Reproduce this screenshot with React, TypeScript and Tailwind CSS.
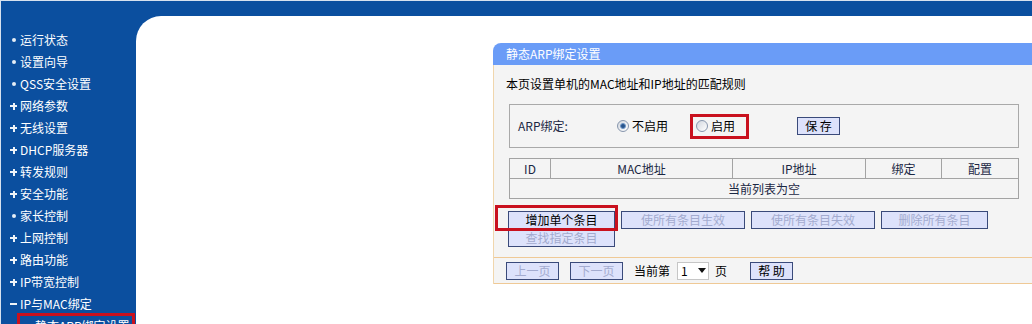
import React from "react";

type Bullet = "dot" | "plus" | "minus";

const menu: [Bullet, string][] = [
  ["dot", "运行状态"],
  ["dot", "设置向导"],
  ["dot", "QSS安全设置"],
  ["plus", "网络参数"],
  ["plus", "无线设置"],
  ["plus", "DHCP服务器"],
  ["plus", "转发规则"],
  ["plus", "安全功能"],
  ["dot", "家长控制"],
  ["plus", "上网控制"],
  ["plus", "路由功能"],
  ["plus", "IP带宽控制"],
  ["minus", "IP与MAC绑定"],
];

const BulletMark: React.FC<{ kind: Bullet }> = ({ kind }) => {
  if (kind === "dot")
    return (
      <span className="w-[10px] flex items-center">
        <span className="ml-[2px] w-[4px] h-[4px] rounded-full bg-[#e6eef6]" />
      </span>
    );
  if (kind === "plus")
    return (
      <span className="w-[10px] flex items-center">
        <span className="relative w-[7px] h-[7px]">
          <span className="absolute left-0 top-[2.5px] w-[7px] h-[2px] bg-[#eef3f8]" />
          <span className="absolute left-[2.5px] top-0 w-[2px] h-[7px] bg-[#eef3f8]" />
        </span>
      </span>
    );
  return (
    <span className="w-[10px] flex items-center">
      <span className="w-[7px] h-[2px] bg-[#eef3f8]" />
    </span>
  );
};

const Btn: React.FC<{ label: string; w: string; off?: boolean }> = ({ label, w, off }) => (
  <div
    className={`${w} h-[18px] flex items-center justify-center bg-[#dde2fb] border border-[#3a4a7a] text-[12px] leading-none ${
      off ? "text-[#a3abcf]" : "text-black"
    }`}
  >
    {label}
  </div>
);

const Radio: React.FC<{ on?: boolean }> = ({ on }) => (
  <span className="w-[12px] h-[12px] rounded-full border border-[#8796ad] bg-gradient-to-br from-[#d2d7df] to-white flex items-center justify-center">
    {on && <span className="w-[6px] h-[6px] rounded-full bg-[#28538a] border border-[#6f97c8]" />}
  </span>
);

export default function App() {
  return (
    <div className="w-[1032px] h-[324px] overflow-hidden bg-[#0b4f9f] border-t border-l border-[#d7e2ef] flex flex-col font-['Noto_Sans_CJK_SC',sans-serif] text-[12px]">
      <div className="h-[15px] shrink-0" />
      <div className="flex flex-1 min-h-0">
        {/* sidebar */}
        <div className="w-[135px] shrink-0 pt-[13px] text-white">
          {menu.map(([b, t]) => (
            <div key={t} className="h-[22px] flex items-center pl-[9px]">
              <BulletMark kind={b} />
              <span className="leading-none">{t}</span>
            </div>
          ))}
          <div className="ml-[16px] -mt-[2px] w-[118px] h-[26px] border-[3px] border-[#c9111e] flex items-center pl-[7px]">
            <span className="w-[5px] h-[1px] bg-white mr-[3px]" />
            <span className="leading-none">静态ARP绑定设置</span>
          </div>
        </div>

        {/* main */}
        <div className="flex-1 bg-white rounded-tl-[25px] pt-[27px] pl-[357px]">
          <div className="w-[540px]">
            <div className="h-[22px] bg-[#6a9cf7] rounded-tl-[8px] text-white flex items-center pl-[13px]">
              静态ARP绑定设置
            </div>
            <div className="bg-[#f4f4f4] border-l border-[#f0d6ad] relative">
              <div className="h-[29px] pt-[9px] pl-[12px] flex items-center text-black">
                本页设置单机的MAC地址和IP地址的匹配规则
              </div>

              <div className="ml-[15px] mt-[10px] w-[510px] h-[44px] border border-[#a9a9a9] flex items-center pl-[8px] relative">
                <span className="w-[99px] text-[#1b2743]">ARP绑定:</span>
                <Radio on />
                <span className="ml-[3px] text-black">不启用</span>
                <span className="ml-[28px]">
                  <Radio />
                </span>
                <span className="ml-[3px] text-black">启用</span>
                <div className="absolute left-[180px] top-[9px] w-[59px] h-[25px] border-[3px] border-[#c9111e]" />
                <div className="ml-[62px] w-[43px] h-[18px] flex items-center justify-center bg-[#dde2fb] border border-[#3a4a7a] text-black">
                  保&nbsp;存
                </div>
              </div>

              <table className="ml-[15px] mt-[10px] w-[510px] border-collapse text-[#1b2743] table-fixed">
                <tbody>
                  <tr className="h-[20px]">
                    <td className="w-[41px] border border-[#a3a3a3] text-center">ID</td>
                    <td className="w-[182px] border border-[#a3a3a3] text-center">MAC地址</td>
                    <td className="w-[133px] border border-[#a3a3a3] text-center">IP地址</td>
                    <td className="w-[76px] border border-[#a3a3a3] text-center">绑定</td>
                    <td className="border border-[#a3a3a3] text-center">配置</td>
                  </tr>
                  <tr className="h-[20px]">
                    <td colSpan={5} className="border border-[#a3a3a3] text-center">
                      当前列表为空
                    </td>
                  </tr>
                </tbody>
              </table>

              <div className="ml-[14px] mt-[12px] flex gap-[6px]">
                <Btn label="增加单个条目" w="w-[107px]" />
                <Btn label="使所有条目生效" w="w-[124px]" off />
                <Btn label="使所有条目失效" w="w-[124px]" off />
                <Btn label="删除所有条目" w="w-[107px]" off />
              </div>
              <div className="ml-[14px] flex">
                <Btn label="查找指定条目" w="w-[107px]" off />
              </div>
              <div className="absolute left-[1px] top-[140px] w-[123px] h-[26px] border-[3px] border-[#c9111e]" />

              <div className="mt-[10px] border-t border-b border-[#efc996] h-[27px] flex items-center pl-[12px] gap-0">
                <Btn label="上一页" w="w-[53px]" off />
                <div className="ml-[11px]">
                  <Btn label="下一页" w="w-[53px]" off />
                </div>
                <span className="ml-[11px] text-black">当前第</span>
                <div className="ml-[7px] w-[32px] h-[18px] bg-white border border-[#c6c6c6] flex items-center pl-[3px] text-black">
                  <span className="leading-none">1</span>
                  <span className="ml-[10px] w-0 h-0 border-l-[4px] border-r-[4px] border-t-[5px] border-l-transparent border-r-transparent border-t-[#111]" />
                </div>
                <span className="ml-[6px] text-black">页</span>
                <div className="ml-[23px] w-[43px] h-[18px] flex items-center justify-center bg-[#dde2fb] border border-[#3a4a7a] text-black">
                  帮&nbsp;助
                </div>
              </div>
            </div>
          </div>
        </div>
      </div>
    </div>
  );
}
